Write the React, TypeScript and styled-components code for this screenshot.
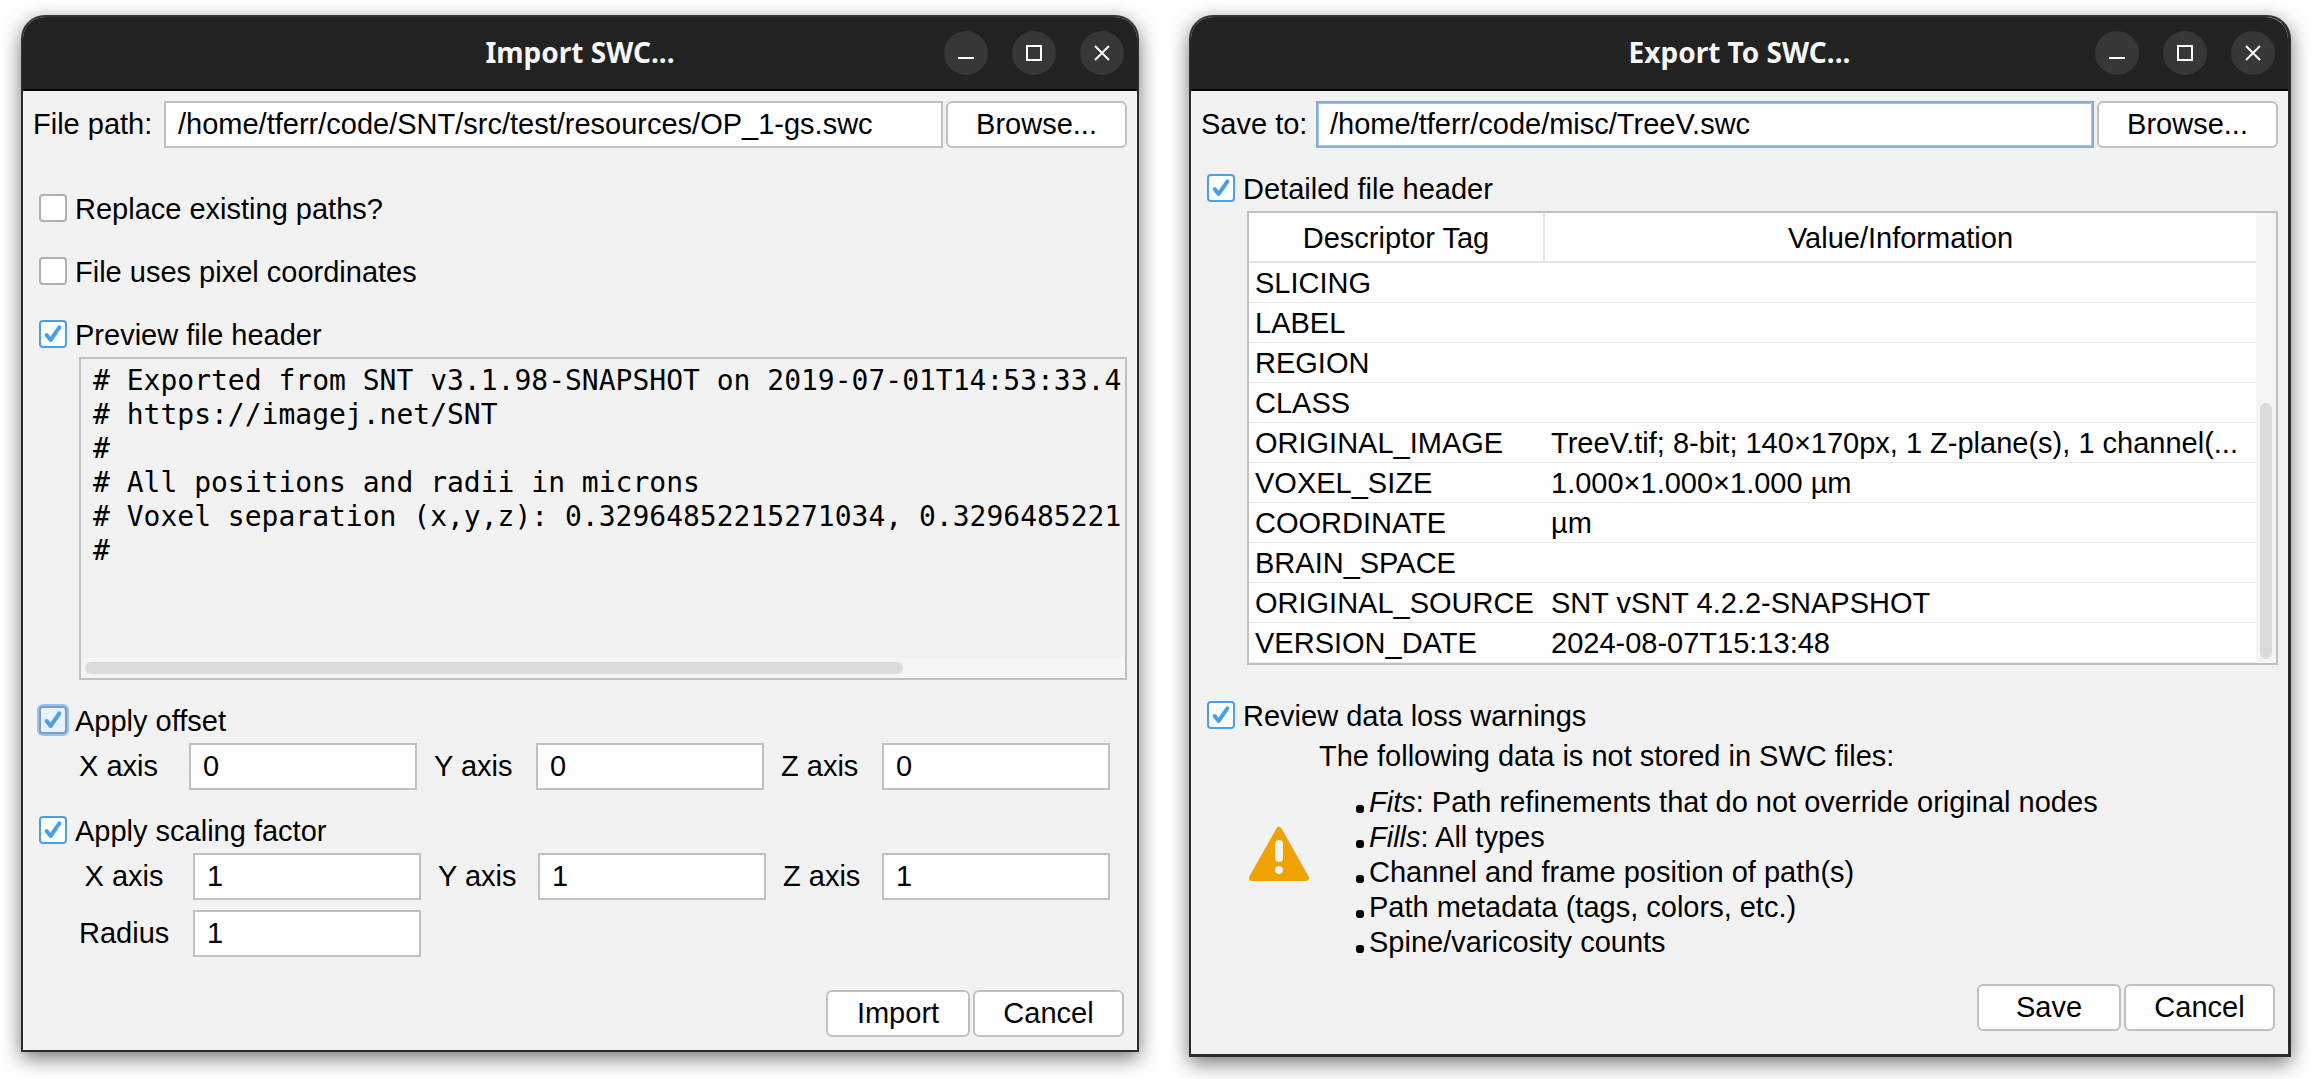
import React, { useState } from "react";
import styled, { createGlobalStyle, css } from "styled-components";

const color = {
  panel: "#f2f2f2",
  frame: "#2a2b2b",
  title: "#222222",
  line: "#c0c0c0",
  soft: "#e4e4e4",
  blue: "#4b9eea",
  thumb: "#dbdbdb",
  track: "#f5f5f5",
};

const Global = createGlobalStyle`
  *, *::before, *::after { box-sizing: border-box; }
  body {
    margin: 0;
    background: #fff;
    color: #000;
    font: 29px/35px "Liberation Sans", Arial, sans-serif;
  }
  button, input { font: inherit; color: inherit; margin: 0; }
`;

const Desktop = styled.main`
  display: grid;
  grid-template-columns: 1118fr 1102fr;
  align-items: start;
  gap: 50px;
  padding: 15px 29px 22px 21px;
`;

const Frame = styled.section<{ $edge: number }>`
  min-width: 0;
  border: 2px solid ${color.frame};
  border-right-width: ${(p) => p.$edge}px;
  border-bottom-width: ${(p) => p.$edge}px;
  border-top-color: #323635;
  border-radius: 24px 24px 0 0;
  background: ${color.panel};
  box-shadow: 0 6px 20px rgba(0, 0, 0, 0.55);
`;

const TitleBar = styled.header`
  display: grid;
  grid-template-columns: 1fr auto 1fr;
  align-items: center;
  height: 74px;
  padding: 0 13px;
  border-bottom: 2px solid #000;
  border-radius: 22px 22px 0 0;
  background: ${color.title};
`;

const Title = styled.h1`
  grid-column: 2;
  margin: 0;
  padding-bottom: 2px;
  color: #f7f7f7;
  font: bold 28px/36px "Noto Sans", "Open Sans", sans-serif;
`;

const WindowButtons = styled.div`
  display: flex;
  justify-content: flex-end;
  gap: 24px;
`;

const RoundButton = styled.button`
  display: grid;
  place-items: center;
  width: 44px;
  height: 44px;
  padding: 0;
  border: 0;
  border-radius: 50%;
  background: #373737;
`;

const Form = styled.form<{ $bottom: number }>`
  display: flex;
  flex-direction: column;
  padding: 10px 10px ${(p) => p.$bottom}px;
`;

const FileRow = styled.div<{ $label: number }>`
  display: grid;
  grid-template-columns: ${(p) => p.$label}px 1fr 184px;
  align-items: center;
`;

const TextField = styled.input<{ $focused?: boolean }>`
  width: 100%;
  min-width: 0;
  height: 47px;
  padding: 0 12px;
  border: 2px solid ${color.line};
  border-radius: 0;
  background: #fff;
  outline: none;
  ${(p) =>
    p.$focused &&
    css`
      border-color: #87aeda;
      box-shadow: inset 0 0 0 1px #a3c3e6;
    `}
`;

const PushButton = styled.button<{ $width?: number }>`
  width: ${(p) => (p.$width ? `${p.$width}px` : "auto")};
  height: 47px;
  padding: 0;
  border: 2px solid ${color.line};
  border-radius: 6px;
  background: #fff;
`;

const BrowseButton = styled(PushButton)`
  margin-left: 3px;
`;

const CheckRow = styled.label<{ $top: number }>`
  display: flex;
  align-items: flex-start;
  gap: 8px;
  margin: ${(p) => p.$top}px 0 0 6px;
  line-height: 30px;
`;

const CheckBox = styled.span`
  display: grid;
  flex: none;
  width: 28px;
  height: 28px;
  > * {
    grid-area: 1 / 1;
  }
  svg {
    pointer-events: none;
  }
`;

const CheckInput = styled.input<{ $focused?: boolean }>`
  appearance: none;
  width: 28px;
  height: 28px;
  border: 2px solid #b0b0b0;
  border-radius: 4px;
  background: #fff;
  outline: none;
  &:checked {
    border-color: ${color.blue};
  }
  ${(p) =>
    p.$focused &&
    css`
      &:checked {
        border-color: #7a9fc6;
      }
      background: #e9f2fb;
      box-shadow: 0 0 0 2px #97c3ee;
    `}
`;

const Indented = styled.div`
  margin-left: 46px;
`;

const Preview = styled(Indented)`
  display: flex;
  flex-direction: column;
  height: 323px;
  margin-top: 7px;
  border: 2px solid ${color.line};
`;

const PreviewText = styled.pre`
  flex: 1;
  margin: 0;
  padding: 5px 0 0 12px;
  overflow: hidden;
  font: 28px/34px "DejaVu Sans Mono", monospace;
`;

const Track = styled.div<{ $vertical?: boolean }>`
  display: flex;
  flex: none;
  padding: 4px;
  background: ${color.track};
  ${(p) =>
    p.$vertical
      ? css`
          flex-direction: column;
          justify-content: flex-end;
          width: 20px;
        `
      : css`
          height: 20px;
        `}
`;

const Thumb = styled.div<{ $vertical?: boolean }>`
  ${(p) => (p.$vertical ? "height: 58%;" : "width: 79%;")}
  border-radius: 6px;
  background: ${color.thumb};
`;

const AxisGrid = styled(Indented)<{ $labels: [number, number, number] }>`
  display: grid;
  grid-template-columns: ${(p) => p.$labels.map((w) => `${w}px minmax(0, 1fr)`).join(" ")};
  align-items: center;
  row-gap: 10px;
  margin-top: 7px;
  margin-right: 17px;
`;

const AxisLabel = styled.label<{ $kind?: "inner" | "centered" }>`
  ${(p) => p.$kind === "inner" && "padding-left: 17px;"}
  ${(p) => p.$kind === "centered" && "width: 90px; text-align: center;"}
`;

const Footer = styled.footer<{ $top: number }>`
  display: flex;
  justify-content: flex-end;
  gap: 3px;
  margin-top: ${(p) => p.$top}px;
  padding-right: 3px;
`;

const TablePane = styled(Indented)`
  display: flex;
  margin-top: 7px;
  border: 2px solid ${color.line};
  background: #fff;
`;

const Table = styled.table`
  flex: 1;
  min-width: 0;
  table-layout: fixed;
  border-collapse: separate;
  border-spacing: 0;
`;

const HeadCell = styled.th<{ $first?: boolean }>`
  height: 50px;
  padding: 2px 0 0;
  border-bottom: 2px solid ${color.soft};
  font-weight: normal;
  ${(p) =>
    p.$first &&
    css`
      width: 296px;
      border-right: 2px solid ${color.soft};
    `}
`;

const Cell = styled.td`
  height: 40px;
  padding: 2px 0 0 6px;
  border-bottom: 1px solid #e9e9e9;
  white-space: nowrap;
  overflow: hidden;
`;

const Warning = styled(Indented)`
  display: flex;
  align-items: center;
  gap: 10px;
  padding: 8px 0 8px 2px;
  svg {
    flex: none;
  }
`;

const Intro = styled.p`
  margin: 0 0 11px;
`;

const LossList = styled.ul`
  margin: 0;
  padding: 0 0 8px 37px;
  list-style: none;
`;

const LossItem = styled.li`
  display: flex;
  align-items: center;
  gap: 5px;
  &::before {
    content: "";
    width: 8px;
    height: 8px;
    margin-top: 12px;
    border-radius: 3px;
    background: #000;
  }
`;

function Check({
  label,
  top,
  on = false,
  focused = false,
}: {
  label: string;
  top: number;
  on?: boolean;
  focused?: boolean;
}) {
  const [checked, setChecked] = useState(on);
  return (
    <CheckRow $top={top}>
      <CheckBox>
        <CheckInput
          type="checkbox"
          checked={checked}
          $focused={focused}
          onChange={(e) => setChecked(e.target.checked)}
        />
        {checked && (
          <svg width="28" height="28" viewBox="0 0 28 28" fill="none" aria-hidden="true">
            <path
              d="M7.6 15 L11.6 20 L20.4 7.4"
              stroke={color.blue}
              strokeWidth="4"
              strokeLinecap="round"
              strokeLinejoin="round"
            />
          </svg>
        )}
      </CheckBox>
      <span>{label}</span>
    </CheckRow>
  );
}

const glyphs: [string, string][] = [
  ["Minimize", "M0 13 H16"],
  ["Maximize", "M1 1 H15 V15 H1 Z"],
  ["Close", "M1 1 L15 15 M15 1 L1 15"],
];

function Window({
  title,
  edge = 2,
  children,
}: {
  title: string;
  edge?: number;
  children: React.ReactNode;
}) {
  return (
    <Frame $edge={edge} aria-label={title}>
      <TitleBar>
        <Title>{title}</Title>
        <WindowButtons>
          {glyphs.map(([name, d]) => (
            <RoundButton key={name} type="button" aria-label={name}>
              <svg width="16" height="16" viewBox="0 0 16 16" fill="none" stroke="#fff" strokeWidth="2">
                <path d={d} />
              </svg>
            </RoundButton>
          ))}
        </WindowButtons>
      </TitleBar>
      {children}
    </Frame>
  );
}

function Axes({
  name,
  value,
  labels,
  centered = false,
  radius = false,
}: {
  name: string;
  value: string;
  labels: [number, number, number];
  centered?: boolean;
  radius?: boolean;
}) {
  return (
    <AxisGrid $labels={labels}>
      {["X", "Y", "Z"].map((axis, i) => (
        <React.Fragment key={axis}>
          <AxisLabel
            htmlFor={`${name}-${axis}`}
            $kind={i > 0 ? "inner" : centered ? "centered" : undefined}
          >
            {axis} axis
          </AxisLabel>
          <TextField id={`${name}-${axis}`} defaultValue={value} />
        </React.Fragment>
      ))}
      {radius && (
        <>
          <AxisLabel htmlFor={`${name}-radius`} $kind="centered">
            Radius
          </AxisLabel>
          <TextField id={`${name}-radius`} defaultValue={value} />
        </>
      )}
    </AxisGrid>
  );
}

const header = `# Exported from SNT v3.1.98-SNAPSHOT on 2019-07-01T14:53:33.4
# https://imagej.net/SNT
#
# All positions and radii in microns
# Voxel separation (x,y,z): 0.32964852215271034, 0.3296485221
#`;

const rows: [string, string][] = [
  ["SLICING", ""],
  ["LABEL", ""],
  ["REGION", ""],
  ["CLASS", ""],
  ["ORIGINAL_IMAGE", "TreeV.tif; 8-bit; 140×170px, 1 Z-plane(s), 1 channel(..."],
  ["VOXEL_SIZE", "1.000×1.000×1.000 µm"],
  ["COORDINATE", "µm"],
  ["BRAIN_SPACE", ""],
  ["ORIGINAL_SOURCE", "SNT vSNT 4.2.2-SNAPSHOT"],
  ["VERSION_DATE", "2024-08-07T15:13:48"],
];

export default function App() {
  return (
    <>
      <Global />
      <Desktop>
        <Window title="Import SWC...">
          <Form $bottom={13} onSubmit={(e) => e.preventDefault()}>
            <FileRow $label={131}>
              <label htmlFor="import-path">File path:</label>
              <TextField
                id="import-path"
                defaultValue="/home/tferr/code/SNT/src/test/resources/OP_1-gs.swc"
              />
              <BrowseButton type="button">Browse...</BrowseButton>
            </FileRow>
            <Check top={46} label="Replace existing paths?" />
            <Check top={33} label="File uses pixel coordinates" />
            <Check top={33} label="Preview file header" on />
            <Preview>
              <PreviewText>{header}</PreviewText>
              <Track>
                <Thumb />
              </Track>
            </Preview>
            <Check top={26} label="Apply offset" on focused />
            <Axes name="offset" value="0" labels={[110, 119, 118]} />
            <Check top={26} label="Apply scaling factor" on />
            <Axes name="scale" value="1" labels={[114, 117, 116]} centered radius />
            <Footer $top={33}>
              <PushButton type="submit" $width={144}>
                Import
              </PushButton>
              <PushButton type="button" $width={151}>
                Cancel
              </PushButton>
            </Footer>
          </Form>
        </Window>

        <Window title="Export To SWC..." edge={3}>
          <Form $bottom={23} onSubmit={(e) => e.preventDefault()}>
            <FileRow $label={115}>
              <label htmlFor="export-path">Save to:</label>
              <TextField id="export-path" $focused defaultValue="/home/tferr/code/misc/TreeV.swc" />
              <BrowseButton type="button">Browse...</BrowseButton>
            </FileRow>
            <Check top={26} label="Detailed file header" on />
            <TablePane>
              <Table>
                <thead>
                  <tr>
                    <HeadCell $first>Descriptor Tag</HeadCell>
                    <HeadCell>Value/Information</HeadCell>
                  </tr>
                </thead>
                <tbody>
                  {rows.map(([tag, value]) => (
                    <tr key={tag}>
                      <Cell>{tag}</Cell>
                      <Cell>{value}</Cell>
                    </tr>
                  ))}
                </tbody>
              </Table>
              <Track $vertical>
                <Thumb $vertical />
              </Track>
            </TablePane>
            <Check top={36} label="Review data loss warnings" on />
            <Warning>
              <svg width="60" height="54" viewBox="0 0 60 54" aria-hidden="true">
                <path
                  d="M30 3 L57 51 H3 Z"
                  fill="#eea300"
                  stroke="#eea300"
                  strokeWidth="6"
                  strokeLinejoin="round"
                />
                <rect x="26" y="13" width="8" height="22" rx="4" fill={color.panel} />
                <circle cx="30" cy="43" r="4" fill={color.panel} />
              </svg>
              <div>
                <Intro>The following data is not stored in SWC files:</Intro>
                <LossList>
                  <LossItem>
                    <span>
                      <em>Fits</em>: Path refinements that do not override original nodes
                    </span>
                  </LossItem>
                  <LossItem>
                    <span>
                      <em>Fills</em>: All types
                    </span>
                  </LossItem>
                  <LossItem>
                    <span>Channel and frame position of path(s)</span>
                  </LossItem>
                  <LossItem>
                    <span>Path metadata (tags, colors, etc.)</span>
                  </LossItem>
                  <LossItem>
                    <span>Spine/varicosity counts</span>
                  </LossItem>
                </LossList>
              </div>
            </Warning>
            <Footer $top={8}>
              <PushButton type="submit" $width={144}>
                Save
              </PushButton>
              <PushButton type="button" $width={151}>
                Cancel
              </PushButton>
            </Footer>
          </Form>
        </Window>
      </Desktop>
    </>
  );
}
